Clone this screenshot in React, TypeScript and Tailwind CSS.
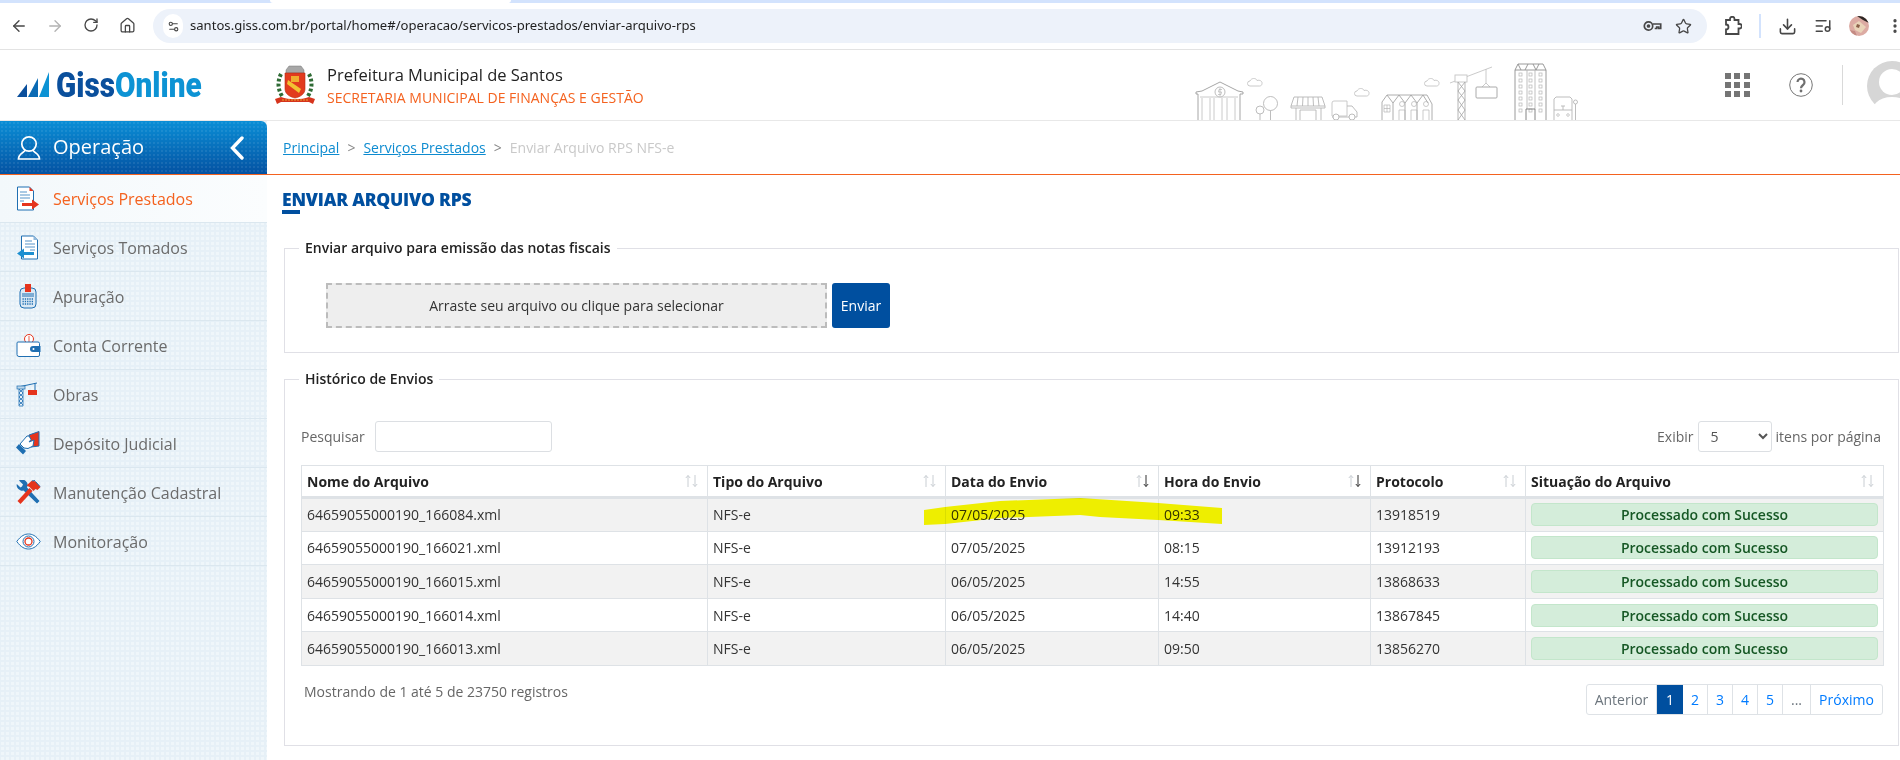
import { ArrowLeft, ArrowRight, Download, House, ListMusic, MoreVertical, RotateCw, Settings2, Star } from "lucide-react";
import type { ReactNode } from "react";

const BLUE = "#1f6fb2";
const RED = "#e5341d";

function IconDocOut() {
  return (
    <svg width="24" height="25" viewBox="0 0 24 25">
      <path d="M1.500 1h12l4 4v19h-16z" fill="#fff" stroke={BLUE} />
      <path d="M13.500 1l4 4h-4z" fill={RED} />
      <path d="M4 6h7M4 9h10M4 12h10M4 15h4" stroke="#8fb8dc" strokeWidth="1.400" />
      <path d="M6 17h10v-3.500l7 5-7 5V20H6z" fill={RED} />
    </svg>
  );
}

function IconDocIn() {
  return (
    <svg width="24" height="25" viewBox="0 0 24 25">
      <path d="M5.500 1h12l4 4v19h-16z" fill="#fff" stroke={BLUE} />
      <path d="M17.500 1l4 4h-4z" fill="#8fb8dc" />
      <path d="M9 6h7M9 9h10M9 12h10M14 15h5" stroke="#8fb8dc" strokeWidth="1.400" />
      <path d="M18 17H8v-3.500l-7 5 7 5V20h10z" fill="#1d8fd0" />
    </svg>
  );
}

function IconCalc() {
  return (
    <svg width="24" height="25" viewBox="0 0 24 25">
      <rect x="4" y="4" width="16" height="20" rx="4" fill="#dbe9f4" stroke={BLUE} />
      <rect x="9" y="0" width="6" height="8" fill={RED} />
      <path d="M6 10h12M6 12h12" stroke={BLUE} />
      <path d="M6.500 15h11M6.500 17.500h11M6.500 20h11" stroke={BLUE} strokeWidth="1.300" strokeDasharray="1.300 1" />
    </svg>
  );
}

function IconWallet() {
  return (
    <svg width="25" height="25" viewBox="0 0 25 25">
      <circle cx="13" cy="6" r="4.500" fill="#fff" stroke={RED} />
      <path d="M12 4h2M12 6h2M12 8h2" stroke={RED} strokeWidth=".8" />
      <path d="M2 9h20a1.500 1.500 0 0 1 1.500 1.500V22a1.500 1.500 0 0 1-1.500 1.500H3A2 2 0 0 1 1 21.500V10a1 1 0 0 1 1-1z" fill="#fff" stroke={BLUE} />
      <path d="M17 13h7.500v6H17a3 3 0 0 1 0-6z" fill={BLUE} />
      <circle cx="17.500" cy="16" r="1" fill="#fff" />
    </svg>
  );
}

function IconCrane() {
  return (
    <svg width="24" height="25" viewBox="0 0 24 25">
      <path d="M2 5l19-4M19 1.500V8" stroke={BLUE} fill="none" />
      <rect x="1" y="4" width="8" height="3" fill="#bcd6ea" stroke={BLUE} strokeWidth=".7" />
      <path d="M3 7v17h4V7M3 7l4 4-4 4 4 4-4 4M7 7l-4 4 4 4-4 4 4 4" stroke={BLUE} fill="none" strokeWidth=".8" />
      <rect x="12" y="8" width="9" height="5" fill={RED} />
    </svg>
  );
}

function IconHand() {
  return (
    <svg width="25" height="25" viewBox="0 0 25 25">
      <path d="M13 4l10-3.500V15l-8 1z" fill={RED} stroke={BLUE} />
      <path d="M11 5L4 13l4 4 4 .5 5-2.500 1-6-5 2 2-2.500-2-3.500z" fill="#fff" stroke={BLUE} />
      <path d="M3 13l7 7-3 3.500-7-7z" fill={BLUE} />
    </svg>
  );
}

function IconTools() {
  return (
    <svg width="25" height="25" viewBox="0 0 25 25">
      <path d="M3 .500L7 4.500 6 6.500 4.500 7.500.800 4a5.500 5.500 0 0 0 6.700 6.500L21 23.500l2.500-2.500L11 7.500a5.500 5.500 0 0 0-8-7z" fill={BLUE} />
      <path d="M1.500 21l12-13 3 3L4.500 24z" fill={RED} />
      <path d="M10.500 5.500l5.500-5 3.500 1 5 5.500-3 3-2-1-2 2-4-4z" fill={RED} />
      <path d="M16 1l3-.5M19.500 1.500l4.500 5" stroke={BLUE} fill="none" />
    </svg>
  );
}

function IconEye() {
  return (
    <svg width="25" height="25" viewBox="0 0 25 25">
      <path d="M.800 12.500C5 6.500 9 5 12.500 5S20 6.500 24.200 12.500C20 18.500 16 20 12.500 20S5 18.500.800 12.500z" fill="#fff" stroke={BLUE} />
      <circle cx="12.500" cy="12.500" r="5.500" fill="none" stroke={BLUE} strokeWidth="1" />
      <circle cx="12.500" cy="12.500" r="3.500" fill="none" stroke={RED} strokeWidth="1.300" />
    </svg>
  );
}

const menu: { label: string; icon: ReactNode }[] = [
  { label: "Serviços Prestados", icon: <IconDocOut /> },
  { label: "Serviços Tomados", icon: <IconDocIn /> },
  { label: "Apuração", icon: <IconCalc /> },
  { label: "Conta Corrente", icon: <IconWallet /> },
  { label: "Obras", icon: <IconCrane /> },
  { label: "Depósito Judicial", icon: <IconHand /> },
  { label: "Manutenção Cadastral", icon: <IconTools /> },
  { label: "Monitoração", icon: <IconEye /> },
];

const rows = [
  ["64659055000190_166084.xml", "07/05/2025", "09:33", "13918519"],
  ["64659055000190_166021.xml", "07/05/2025", "08:15", "13912193"],
  ["64659055000190_166015.xml", "06/05/2025", "14:55", "13868633"],
  ["64659055000190_166014.xml", "06/05/2025", "14:40", "13867845"],
  ["64659055000190_166013.xml", "06/05/2025", "09:50", "13856270"],
];

function SortIcon({ active }: { active?: boolean }) {
  return (
    <svg width="13" height="14" viewBox="0 0 13 14" className="shrink-0">
      <path d="M3 13V1.500M.800 4L3 1.500 5.200 4" stroke="#c9ced3" fill="none" />
      <path d="M10 1v11.500M7.800 10l2.200 2.500 2.200-2.500" stroke={active ? "#333" : "#c9ced3"} fill="none" />
    </svg>
  );
}

function BrowserBar() {
  return (
    <div className="h-[50px] shrink-0 overflow-hidden border-b border-[#e3e3e3] bg-white">
      <div className="flex h-[3px] bg-[#d3e3fd]">
        <div className="ml-[270px] h-[3px] w-[241px] rounded-b-md bg-white" />
      </div>
      <div className="flex h-[46px] items-center text-[#474747]">
        <div className="flex w-[145px] shrink-0 pl-px">
          <span className="flex w-9 justify-center"><ArrowLeft size={18} strokeWidth={1.8} /></span>
          <span className="flex w-9 justify-center text-[#b3b3b3]"><ArrowRight size={18} strokeWidth={1.8} /></span>
          <span className="flex w-9 justify-center"><RotateCw size={16} strokeWidth={2} /></span>
          <span className="flex w-9 justify-center"><House size={17} strokeWidth={1.8} /></span>
        </div>
        <div className="ml-2 flex h-[34px] w-[1554px] shrink-0 items-center rounded-full bg-[#edf2fa] pr-[15px] pl-[10px]">
          <span className="flex h-[24px] w-[20px] items-center justify-center rounded-full bg-white">
            <Settings2 size={13} strokeWidth={2} />
          </span>
          <span className="ml-[7px] flex-1 font-['Noto_Sans',sans-serif] text-[13.100px] text-[#1f1f1f]">
            santos.giss.com.br/portal/home#/operacao/servicos-prestados/enviar-arquivo-rps
          </span>
          <svg width="19" height="12" viewBox="0 0 19 12" fill="none" stroke="#474747" strokeWidth="1.700">
            <circle cx="5.500" cy="6" r="4.200" />
            <circle cx="5.500" cy="6" r="1" fill="#474747" />
            <path d="M9.700 4h8v4.500h-2V7h-2v1.500h-2" />
          </svg>
          <span className="ml-[13px]"><Star size={17} strokeWidth={1.8} /></span>
        </div>
        <span className="ml-2 flex w-9 shrink-0 justify-center">
          <svg width="18" height="20" viewBox="0 0 18 20" fill="none" stroke="#474747" strokeWidth="1.800">
            <path d="M2 4h4V3a2 2 0 0 1 4.500 0v1h4v4h1a2 2 0 0 1 0 4.500h-1V18H2v-4.500a2.500 2.500 0 0 0 0-5z" />
          </svg>
        </span>
        <span className="flex w-[18px] shrink-0 justify-center"><span className="h-[24px] w-[2px] bg-[#d3e3fd]" /></span>
        <span className="flex w-9 shrink-0 justify-center"><Download size={19} strokeWidth={2} /></span>
        <span className="flex w-9 shrink-0 justify-center"><ListMusic size={18} strokeWidth={2} /></span>
        <span className="flex w-9 shrink-0 justify-center">
          <svg width="20" height="20" viewBox="0 0 20 20">
            <defs>
              <clipPath id="profile"><circle cx="10" cy="10" r="10" /></clipPath>
            </defs>
            <g clipPath="url(#profile)">
              <rect width="20" height="20" fill="#dcaba3" />
              <path d="M8 0h12v7L14 4z" fill="#2c2624" />
              <path d="M4 9l6-4 7 6-5 6-6-3z" fill="#e9d3b8" />
              <path d="M8 8l3 1-1 3-3-1z" fill="#8a5f48" />
              <path d="M0 14l6 1 2 5H0z" fill="#c48b83" />
            </g>
          </svg>
        </span>
        <span className="flex w-9 shrink-0 justify-center"><MoreVertical size={18} strokeWidth={2.4} /></span>
      </div>
    </div>
  );
}

function Logo() {
  return (
    <div className="flex w-[275px] shrink-0 items-center pl-[17px]">
      <svg width="32" height="26" viewBox="0 0 32 26" className="shrink-0">
        <path d="M0 25L10 12v13z" fill="#0a4f9c" />
        <path d="M11 25L21 6v19z" fill="#0a6ab4" />
        <path d="M22 25L32 0v25z" fill="#0d93d4" />
      </svg>
      <span className="ml-[7px] origin-left scale-x-[.85] font-['Roboto',sans-serif] text-[35px] leading-none font-black whitespace-nowrap">
        <span className="text-[#0a4f9c]">Giss</span>
        <span className="text-[#0d93d4]">Online</span>
      </span>
    </div>
  );
}

function Crest() {
  return (
    <svg width="40" height="40" viewBox="0 0 40 40" className="shrink-0">
      <path d="M11 5l3-4h12l3 4v3H11z" fill="#a7a7a7" stroke="#777" strokeWidth=".5" />
      <path d="M6 9c-3 6-4 14 1 22M34 9c3 6 4 14-1 22" stroke="#2f6b35" strokeWidth="4" strokeDasharray="3 2" fill="none" />
      <path d="M10 8h20v16c0 5-5 8-10 9-5-1-10-4-10-9z" fill="#e23b1e" stroke="#b72c14" strokeWidth=".6" />
      <path d="M13 15l13 9-2 4-12-9z" fill="#f2c233" />
      <path d="M16 11h8v6h-8z" fill="#f2c233" opacity=".85" />
      <path d="M0 34l6-2c8 3 20 3 28 0l6 2-2 5-4-2H6l-4 2z" fill="#d6341c" />
      <path d="M7 35h26" stroke="#f2c233" strokeWidth=".8" strokeDasharray="2 1" />
    </svg>
  );
}

function Cloud({ x, y }: { x: number; y: number }) {
  return (
    <path
      transform={`translate(${x} ${y})`}
      d="M2 8a2.500 2.500 0 0 1 0-5c1-3 6-3.500 7-.5 3-1 5.500 1 5 3 0 1.500-1 2.500-2.500 2.500z"
      fill="#fff"
    />
  );
}

function Skyline() {
  return (
    <svg width="400" height="60" viewBox="1190 60 400 60" fill="none" stroke="#b5b5b5" strokeWidth=".9" className="shrink-0 self-end">
      <path d="M1198 120V94h-2v-2l6-1 18-9 18 9 5 1v2h-3v26" stroke="#9c9c9c" />
      <circle cx="1220" cy="92" r="5" />
      <path d="M1222 89.500h-3l-.5 2.500h3l-.5 2.500h-3M1220 88v8" strokeWidth=".7" />
      <path d="M1200 97h38M1202 98v22M1210 98v22M1214 98v22M1222 98v22M1227 98v22M1235 98v22" stroke="#c4c4c4" />
      <circle cx="1270.500" cy="103.500" r="7" />
      <circle cx="1260" cy="110" r="4" />
      <path d="M1270.500 110.500V120M1260 114v6" />
      <path d="M1294 97h28l3 9h-34z" />
      <path d="M1298 97l-1 9M1303 97l-.5 9M1308 97v9M1313 97l.5 9M1318 97l1 9M1291 106v2h34v-2" />
      <path d="M1296 108v12M1321 108v12M1300 110h16v10M1300 110v10" />
      <path d="M1332 116v-13a2 2 0 0 1 2-2h13v15z" stroke="#c4c4c4" />
      <path d="M1347 106h5l5 6v5h-25" />
      <circle cx="1336" cy="117" r="3" fill="#fff" />
      <circle cx="1352" cy="117" r="3" fill="#fff" />
      <g stroke="#c4c4c4">
        <Cloud x={1248} y={78} />
        <Cloud x={1355} y={88} />
        <Cloud x={1425} y={78} />
      </g>
      <path d="M1382 120v-18l5-7h40l5 9v16M1387 95l6 8v17M1393 103l6-8 6 8v17M1405 103l6-8 6 8v17M1417 103l6-8 5 8" stroke="#a5a5a5" />
      <path d="M1384 105h6v7h-6zM1387 105v7M1384 108.500h6" strokeWidth=".7" />
      <circle cx="1402" cy="104" r="2.500" strokeWidth=".7" />
      <circle cx="1414" cy="104" r="2.500" strokeWidth=".7" />
      <circle cx="1426" cy="104" r="2.500" strokeWidth=".7" />
      <path d="M1399 110h6v10M1399 110v10M1411 110h6v10M1411 110v10M1423 110h6v10M1423 110v10" strokeWidth=".7" />
      <path d="M1450 83l42-16M1486 69v14l-4 4M1486 83l4 4" stroke="#c4c4c4" />
      <rect x="1455" y="75" width="12" height="7" fill="#fff" stroke="#c4c4c4" />
      <rect x="1476" y="87" width="21" height="11" rx="1" stroke="#a0a0a0" />
      <path d="M1458 82v38M1465 82v38M1458 82l7 9-7 9 7 10-7 10M1465 82l-7 9 7 9-7 10 7 10" stroke="#a5a5a5" strokeWidth=".8" />
      <path d="M1515 120V70l3-6h25l3 6v50M1515 70h31M1518 64l3 6M1525 70l3-6M1533 64l3 6M1536 70l3-6" stroke="#8f8f8f" />
      <path d="M1527 70v39M1535 70v39" stroke="#b8b8b8" />
      {[0, 1, 2, 3, 4, 5, 6].map((i) => (
        <g key={i} strokeWidth=".7">
          <rect x="1519" y={73 + i * 6} width="3" height="3" />
          <rect x="1529" y={73 + i * 6} width="3" height="3" />
          <rect x="1539" y={73 + i * 6} width="3" height="3" />
        </g>
      ))}
      <path d="M1526 120v-11h9v11" stroke="#777" />
      <path d="M1554 120V99l2-2h14l2 2v21M1554 110h18M1563 110v-4M1561 106h4" />
      <circle cx="1558" cy="115" r="1.300" strokeWidth=".7" />
      <circle cx="1568" cy="115" r="1.300" strokeWidth=".7" />
      <circle cx="1575.500" cy="102" r="2" />
      <path d="M1575.500 104v16" />
    </svg>
  );
}

function Header() {
  return (
    <div className="flex h-[71px] shrink-0 items-center overflow-hidden border-b border-[#e8e8e8] bg-white">
      <Logo />
      <Crest />
      <div className="mt-[2px] ml-3 w-[863px] shrink-0">
        <div className="text-[16.500px] leading-[23px] font-medium whitespace-nowrap text-[#222]">Prefeitura Municipal de Santos</div>
        <div className="text-[14px] leading-[23px] whitespace-nowrap text-[#f4621f]">SECRETARIA MUNICIPAL DE FINANÇAS E GESTÃO</div>
      </div>
      <Skyline />
      <div className="ml-[135px] grid w-[25px] shrink-0 grid-cols-3 gap-[3px]">
        {Array.from({ length: 9 }).map((_, i) => (
          <span key={i} className="h-[6px] w-[6px] bg-[#757575]" />
        ))}
      </div>
      <svg width="24" height="24" viewBox="0 0 24 24" fill="none" className="ml-[39px] shrink-0">
        <circle cx="12" cy="12" r="11.300" stroke="#777" strokeWidth="1" />
        <path d="M8.500 9a3.500 3.500 0 1 1 5.500 3c-1.400 1-2 1.600-2 3.300" stroke="#6f6f6f" strokeWidth="2.200" />
        <circle cx="12" cy="18" r="1.400" fill="#6f6f6f" />
      </svg>
      <span className="ml-[29px] h-[40px] w-px shrink-0 bg-[#d9d9d9]" />
      <svg width="33" height="60" viewBox="0 0 33 60" className="mt-[11px] ml-[24px] shrink-0 self-start">
        <circle cx="25" cy="25" r="25" fill="#d6d6d6" />
        <circle cx="25" cy="21" r="13" fill="#fff" />
        <path d="M3 60c0-16 8-24 22-24s22 8 22 24z" fill="#fff" />
      </svg>
    </div>
  );
}

function Sidebar() {
  return (
    <aside className="flex w-[267px] shrink-0 flex-col bg-[#e6f0f7] bg-[radial-gradient(#eff6fa_1.600px,transparent_1.600px)] bg-[length:5px_5px] text-[16px]">
      <div className="flex h-[53px] items-center rounded-tr-md bg-[radial-gradient(#ffffff14_1px,transparent_1px),linear-gradient(#0a8ed6,#0452a2)] bg-[length:4px_4px,100%_100%] pr-[23px] pl-[17px] text-white">
        <svg width="24" height="25" viewBox="0 0 24 25" fill="none" stroke="#fff" strokeWidth="1.700" className="shrink-0">
          <circle cx="12" cy="9" r="7.200" />
          <path d="M8 15c0 2.500-6.500 3-6.500 9h21c0-6-6.500-6.500-6.500-9" />
        </svg>
        <span className="ml-3 flex-1 pb-[2px] text-[20px]">Operação</span>
        <svg width="14" height="24" viewBox="0 0 14 24" fill="none" stroke="#fff" strokeWidth="3.400" strokeLinecap="round">
          <path d="M12 2L2.500 12 12 22" />
        </svg>
      </div>
      <div className="h-px bg-[#f4621f]" />
      {menu.map((item, i) => (
        <div
          key={item.label}
          className={
            i === 0
              ? "flex h-[48px] items-center border-b border-[#dbe7ef] bg-[linear-gradient(90deg,#f3f8fb,#fbfdfe)] pl-[16px] text-[#f4621f]"
              : "flex h-[49px] items-center border-b border-[#dbe7ef] pt-px pl-[16px] text-[#6b6b6b]"
          }
        >
          <span className="flex w-[37px] shrink-0">{item.icon}</span>
          <span className="whitespace-nowrap">{item.label}</span>
        </div>
      ))}
    </aside>
  );
}

function Breadcrumb() {
  return (
    <div className="flex h-[54px] shrink-0 items-center border-b border-[#f4621f] pl-[16px] text-[14px]">
      <a className="text-[#0d8bd0] underline">Principal</a>
      <span className="mx-[8px] text-[#888]">&gt;</span>
      <a className="text-[#0d8bd0] underline">Serviços Prestados</a>
      <span className="mx-[8px] text-[#888]">&gt;</span>
      <span className="text-[#c9c9c9]">Enviar Arquivo RPS NFS-e</span>
    </div>
  );
}

function UploadBox() {
  return (
    <fieldset className="ml-[17px] w-[1615px] border border-[#e0e0e6] pb-[24px]">
      <legend className="ml-[14px] px-[6px] text-[14px] leading-[20px] font-semibold text-[#222]">
        Enviar arquivo para emissão das notas fiscais
      </legend>
      <div className="flex gap-[5px] pt-[25px] pl-[41px]">
        <div className="flex h-[45px] w-[501px] items-center justify-center border-2 border-dashed border-[#bcbcbc] bg-[#eeeeee] text-[14px] text-[#333]">
          Arraste seu arquivo ou clique para selecionar
        </div>
        <button type="button" className="h-[45px] w-[58px] rounded-[3px] bg-[#004f9f] text-[14px] text-white">
          Enviar
        </button>
      </div>
    </fieldset>
  );
}

function HistoryTable() {
  return (
    <table className="mt-[12px] w-[1582px] table-fixed border-collapse text-[14px] text-[#333]">
      <thead>
        <tr className="h-[32px] border-b-[3px] border-[#dee2e6]">
          {[
            ["Nome do Arquivo", "w-[406px]", false],
            ["Tipo do Arquivo", "w-[238px]", false],
            ["Data do Envio", "w-[213px]", true],
            ["Hora do Envio", "w-[212px]", true],
            ["Protocolo", "w-[155px]", false],
            ["Situação do Arquivo", "w-[358px]", false],
          ].map(([label, width, active]) => (
            <th key={label as string} className={`${width} border border-[#dee2e6] px-[5px] text-left font-bold text-[#222]`}>
              <div className="flex items-center justify-between pr-[4px]">
                {label}
                <SortIcon active={active as boolean} />
              </div>
            </th>
          ))}
        </tr>
      </thead>
      <tbody>
        {rows.map((r, i) => (
          <tr key={r[0]} className={i % 2 === 0 ? "h-[33.600px] bg-[#f2f2f2]" : "h-[33.600px] bg-white"}>
            <td className="border border-[#dee2e6] px-[5px]">{r[0]}</td>
            <td className="border border-[#dee2e6] px-[5px]">NFS-e</td>
            <td className="border border-[#dee2e6] px-[5px]">{r[1]}</td>
            <td className="border border-[#dee2e6] px-[5px]">{r[2]}</td>
            <td className="border border-[#dee2e6] px-[5px]">{r[3]}</td>
            <td className="border border-[#dee2e6] px-[5px]">
              <div className="flex h-[23px] items-center justify-center rounded-[4px] border border-[#c3e6cb] bg-[#d4edda] font-semibold text-[#155724]">
                Processado com Sucesso
              </div>
            </td>
          </tr>
        ))}
      </tbody>
    </table>
  );
}

function Pagination() {
  const cell = "flex h-full items-center justify-center border-r border-[#dee2e6]";
  return (
    <div className="flex h-[31px] w-[297px] items-stretch rounded-[3px] border border-[#dee2e6] text-[14px]">
      <span className={`${cell} w-[70px] text-[#6c757d]`}>Anterior</span>
      <span className="flex w-[26px] items-center justify-center bg-[#004f9f] text-white">1</span>
      <span className={`${cell} w-[25px] text-[#007bff]`}>2</span>
      <span className={`${cell} w-[25px] text-[#007bff]`}>3</span>
      <span className={`${cell} w-[25px] text-[#007bff]`}>4</span>
      <span className={`${cell} w-[25px] text-[#007bff]`}>5</span>
      <span className={`${cell} w-[28px] text-[#6c757d]`}>...</span>
      <span className="flex flex-1 items-center justify-center text-[#007bff]">Próximo</span>
    </div>
  );
}

function HistoryBox() {
  return (
    <fieldset className="mt-[16px] ml-[17px] w-[1615px] border border-[#e0e0e6] pb-[30px]">
      <legend className="ml-[14px] px-[6px] text-[14px] leading-[20px] font-semibold text-[#222]">Histórico de Envios</legend>
      <div className="pl-[16px]">
        <div className="mt-[31px] flex h-[33px] w-[1582px] items-center justify-between text-[14px] text-[#666]">
          <div className="flex items-center gap-[10px]">
            Pesquisar
            <input className="h-[31px] w-[177px] rounded-[3px] border border-[#dcdfe3] bg-white" />
          </div>
          <div className="flex items-center gap-[4px] pr-[2px]">
            Exibir
            <select defaultValue="5" className="h-[31px] w-[74px] rounded-[3px] border border-[#dcdfe3] bg-white pl-2 text-[#555]">
              <option value="5">5</option>
              <option value="10">10</option>
            </select>
            itens por página
          </div>
        </div>
        <HistoryTable />
        <div className="mt-[18px] flex w-[1582px] justify-between">
          <span className="pl-[3px] text-[14px] leading-[16px] text-[#666]">Mostrando de 1 até 5 de 23750 registros</span>
          <Pagination />
        </div>
      </div>
    </fieldset>
  );
}

export default function App() {
  return (
    <div className="relative flex h-[760px] w-[1900px] flex-col overflow-hidden bg-white font-['Open_Sans',sans-serif]">
      <BrowserBar />
      <Header />
      <div className="flex min-h-0 flex-1">
        <Sidebar />
        <main className="min-w-0 flex-1">
          <Breadcrumb />
          <h1 className="mt-[14px] ml-[15px] h-[21px] text-[17.500px] leading-[21px] font-extrabold tracking-[-0.2px] text-[#004f9f]">ENVIAR ARQUIVO RPS</h1>
          <div className="ml-[15px] h-[4px] w-[18px] bg-[#004f9f]" />
          <div className="h-[24px]" />
          <UploadBox />
          <HistoryBox />
        </main>
      </div>
      {/* marker stroke drawn on the screenshot */}
      <svg width="300" height="30" viewBox="924 497 300 30" className="absolute top-[497px] left-[924px] mix-blend-multiply">
        <path d="M924 510L945 507 1000 501 1080 498 1158 503 1222 508V524L1158 520 1100 517 1080 515 1000 518 945 524 924 525z" fill="#fbfb00" />
      </svg>
    </div>
  );
}
